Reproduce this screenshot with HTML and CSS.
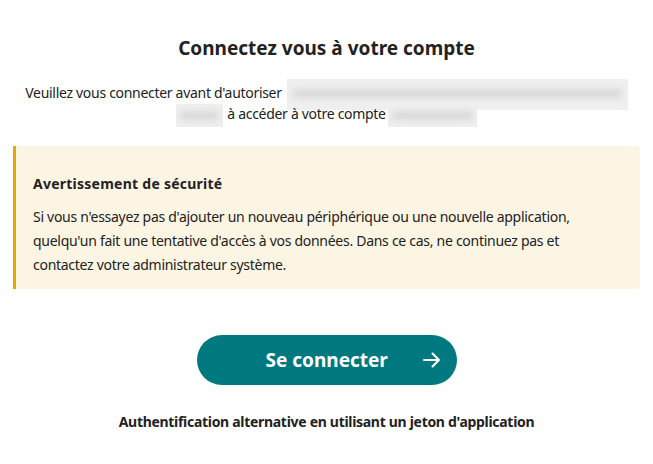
FILE: index.html
```html
<!DOCTYPE html>
<html lang="fr">
<head>
<meta charset="utf-8">
<title>Connexion</title>
<link rel="stylesheet" href="styles.css">
</head>
<body>
<main class="page">
  <h2 class="title">Connectez vous à votre compte</h2>
  <p class="intro">
    <span class="line">Veuillez vous connecter avant d'autoriser<span class="redact redact-long"><span class="smudge"></span></span></span>
    <span class="line"><span class="redact redact-small"><span class="smudge"></span></span>à accéder à votre compte<span class="redact redact-mid"><span class="smudge"></span></span></span>
  </p>
  <section class="notecard">
    <h3 class="note-title">Avertissement de sécurité</h3>
    <p class="note-text">Si vous n'essayez pas d'ajouter un nouveau périphérique ou une nouvelle application, quelqu'un fait une tentative d'accès à vos données. Dans ce cas, ne continuez pas et contactez votre administrateur système.</p>
  </section>
  <div class="actions">
    <button class="login-btn" type="button">
      <span class="btn-text">Se connecter</span>
      <svg class="arrow" width="18" height="16" viewBox="0 0 18 16" aria-hidden="true">
        <path d="M1 8H16M9.5 1.5L16 8L9.5 14.5" fill="none" stroke="#fff" stroke-width="2" stroke-linecap="round" stroke-linejoin="round"/>
      </svg>
    </button>
  </div>
  <p class="alt-link">Authentification alternative en utilisant un jeton d'application</p>
</main>
</body>
</html>
```
FILE: styles.css
```css
html, body {
  margin: 0;
  padding: 0;
  background: #ffffff;
}
body {
  font-family: "Noto Sans", "Open Sans", sans-serif;
  color: #222222;
  font-size: 14px;
}
.page {
  width: 627px;
  margin: 0 auto;
  padding-top: 34px;
  display: flex;
  flex-direction: column;
  align-items: center;
}
.title {
  margin: 0;
  font-size: 19px;
  line-height: 28px;
  font-weight: 700;
  letter-spacing: 0;
}
.intro {
  margin: 17px 0 0;
  text-align: center;
  line-height: 23px;
  font-size: 14px;
  letter-spacing: -0.3px;
}
.line {
  display: block;
  height: 23px;
}
.redact {
  display: inline-block;
  vertical-align: middle;
  background: #efefef;
  overflow: hidden;
}
.smudge {
  display: block;
  margin: 10px 6px;
  height: 9px;
  background: #d9d9d9;
  border-radius: 4px;
  filter: blur(3px);
}
.redact-long {
  width: 341px;
  height: 31px;
  margin-left: 5px;
}
.redact-small {
  width: 47px;
  height: 23px;
  margin-right: 4px;
}
.redact-mid {
  width: 89px;
  height: 23px;
  margin-left: 2px;
}
.redact-small .smudge,
.redact-mid .smudge {
  margin: 7px 4px;
}
.notecard {
  align-self: stretch;
  margin-top: 21px;
  background: #fdf5e4;
  border-left: 3px solid #e9a500;
  border-radius: 0 4px 4px 0;
  padding: 26px 20px 12px 17px;
}
.note-title {
  margin: 0;
  font-size: 14px;
  line-height: 24px;
  font-weight: 700;
  letter-spacing: 0.25px;
}
.note-text {
  margin: 9px 0 0;
  font-size: 14px;
  line-height: 24px;
  letter-spacing: -0.28px;
}
.actions {
  margin-top: 46px;
}
.login-btn {
  width: 260px;
  height: 50px;
  border: none;
  border-radius: 25px;
  background: #00787f;
  color: #ffffff;
  font-family: inherit;
  font-size: 19px;
  font-weight: 700;
  letter-spacing: 0;
  display: flex;
  align-items: center;
  padding: 0 16px 0 69px;
  cursor: pointer;
}
.btn-text {
  flex: 1;
  text-align: left;
}
.arrow {
  display: block;
}
.alt-link {
  margin: 25px 0 0;
  font-size: 14px;
  line-height: 24px;
  font-weight: 700;
  letter-spacing: -0.3px;
}
```
